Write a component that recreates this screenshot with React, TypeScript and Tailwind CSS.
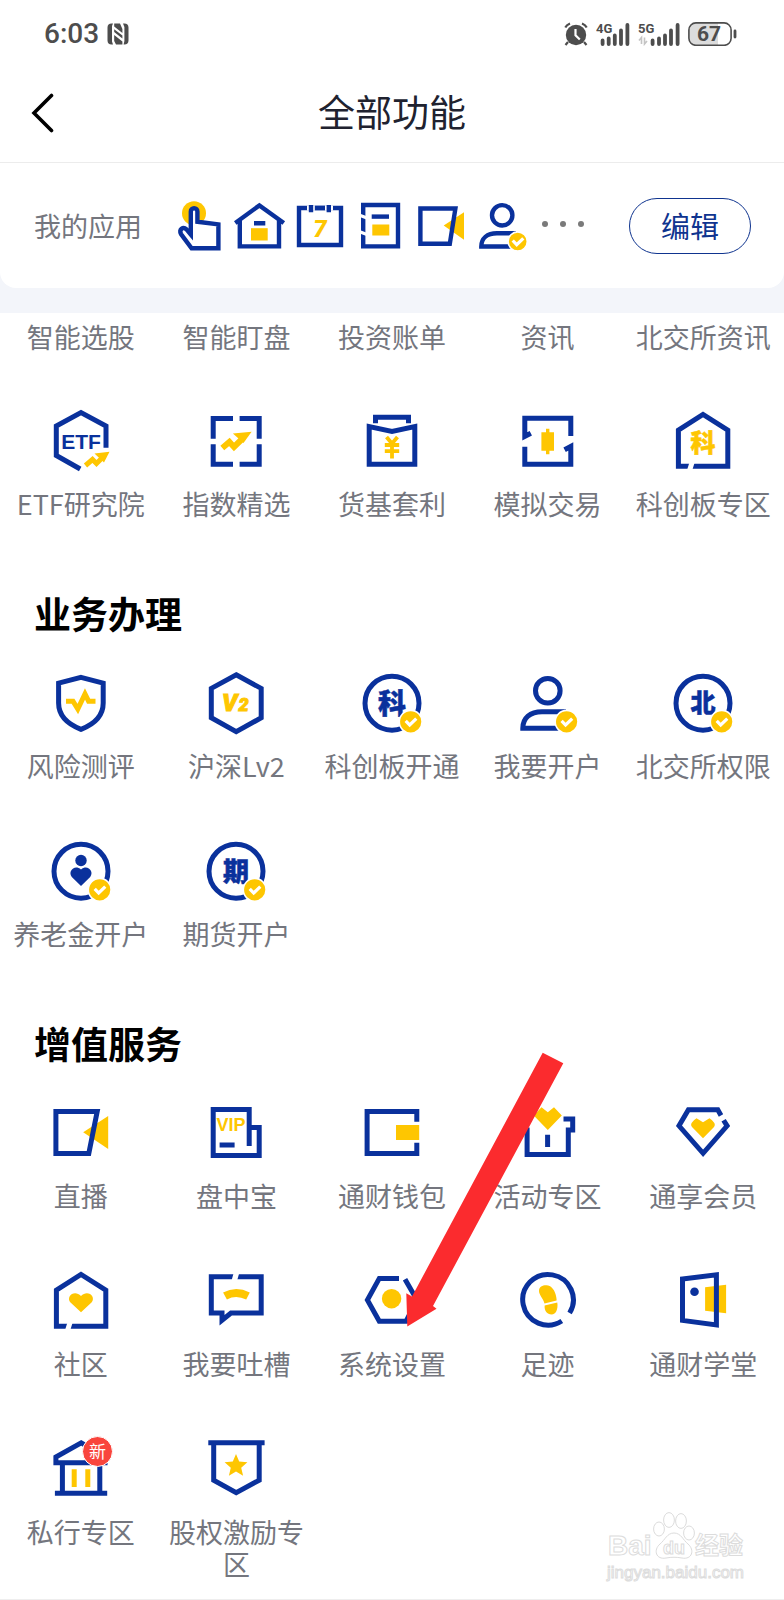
import { ReactNode } from "react"

const BLUE = "#0a319c"
const YELLOW = "#fec601"

interface AppItem {
    name: string
    icon: ReactNode
}

function Icon({ children }: { children: ReactNode }) {
    return (
        <svg viewBox="0 0 72 72" className="h-18 w-18" fill="none" stroke={BLUE} strokeWidth="5" aria-hidden="true">
            {children}
        </svg>
    )
}

function SmallIcon({ children }: { children: ReactNode }) {
    return (
        <svg viewBox="0 0 52 52" className="h-13 w-13 shrink-0" fill="none" stroke={BLUE} strokeWidth="4.4" aria-hidden="true">
            {children}
        </svg>
    )
}

function Check({ x, y, r }: { x: number, y: number, r: number }) {
    return (
        <g>
            <circle cx={x} cy={y} r={r + 1} fill={YELLOW} stroke="#fff" strokeWidth="1.6" />
            <path d={`M${x - 5} ${y - 1}l4 4.2l6.6 -6.4`} stroke="#fff" strokeWidth="3.2" />
        </g>
    )
}

function Glyph({ text, y, size, color }: { text: string, y: number, size: number, color: string }) {
    return (
        <text x="36" y={y} fontSize={size} fill={color} stroke={color} strokeWidth="0.5" textAnchor="middle" className="font-black">{text}</text>
    )
}

function House({ children }: { children: ReactNode }) {
    return (
        <Icon>
            <path d="M11.4 61.2V25.2L36 9.4L60.8 25.2V61.2Z" />
            <path d="M25.2 57L22.4 66" stroke="#fff" strokeWidth="5" />
            {children}
        </Icon>
    )
}

function Ring({ children }: { children: ReactNode }) {
    return (
        <Icon>
            <circle cx="36" cy="36.2" r="27" />
            {children}
            <Check x={54.7} y={54.8} r={10.4} />
        </Icon>
    )
}

const research: AppItem[] = [
    {
        name: "ETF研究院",
        icon: (
            <Icon>
                <path d="M61 42.7V21L36 7.6L11.3 21V50.5L35.2 64" />
                <text x="36" y="43.8" fontSize="21" fill={BLUE} stroke="none" textAnchor="middle" className="font-['Liberation_Sans',sans-serif] font-bold">ETF</text>
                <path d="M40.5 60.5L47.5 54.5L51.5 58.5L58 52" stroke={YELLOW} />
                <path d="M49.5 48.5L64.5 46.8L59 57.5Z" fill={YELLOW} stroke="none" />
            </Icon>
        ),
    },
    {
        name: "指数精选",
        icon: (
            <Icon>
                <path d="M33 13.4H13.2V33.7M39.6 13.4H59.2V33.7M33 59.3H13.2V39.3M39.6 59.3H59.2V39.3" />
                <path d="M22.3 43L29.4 37L34 42L43.6 32.5" stroke={YELLOW} strokeWidth="6" />
                <path d="M32.9 28.4L51.6 26.7L43.5 38Z" fill={YELLOW} stroke="none" />
            </Icon>
        ),
    },
    {
        name: "货基套利",
        icon: (
            <Icon>
                <path d="M19.5 18.3V12.2H52.5V18.3" />
                <path d="M13.2 21.6V59.3H58.8V21.6L36 26.4Z" />
                <path d="M30.5 32L36 38.5L41.5 32M28.8 40H43.2M28.8 46.2H43.2M36 38.5V53.4" stroke={YELLOW} strokeWidth="3.8" />
            </Icon>
        ),
    },
    {
        name: "模拟交易",
        icon: (
            <Icon>
                <path d="M58.8 31V13.2H12.8V31.4L18.8 28.2M12.8 41.7V59.3H58.8V41.4L52.6 44.8" />
                <path d="M29.4 27.3H34V23.7H37.4V27.3H42V45.7H37.4V49.2H34V45.7H29.4Z" fill={YELLOW} stroke="none" />
            </Icon>
        ),
    },
    {
        name: "科创板专区",
        icon: <House><Glyph text="科" y={47} size={25} color={YELLOW} /></House>,
    },
]

const business: AppItem[] = [
    {
        name: "风险测评",
        icon: (
            <Icon>
                <path d="M36 10.4L58.2 16.2V36C58.2 48 51 56.5 36 62.3C21 56.5 13.6 48 13.6 36V16.2Z" />
                <path d="M21 34.2H28L32.8 42L40 27L43.6 34.2H50.5" stroke={YELLOW} />
            </Icon>
        ),
    },
    {
        name: "沪深Lv2",
        icon: (
            <Icon>
                <path d="M36.2 7.8L61.2 21.4V50.8L36.2 64.6L11.3 50.8V21.4Z" />
                <g fill={YELLOW} stroke={YELLOW} strokeWidth="1" className="font-['Roboto',sans-serif] font-black italic">
                    <text x="22" y="44.2" fontSize="24">V</text>
                    <text x="38.5" y="44.2" fontSize="18">2</text>
                </g>
            </Icon>
        ),
    },
    {
        name: "科创板开通",
        icon: <Ring><Glyph text="科" y={46.5} size={28} color={BLUE} /></Ring>,
    },
    {
        name: "我要开户",
        icon: (
            <Icon>
                <circle cx="35.8" cy="23.7" r="12.3" />
                <path d="M54 44.7H30C18 44.7 10.8 51 10.8 61.3H50" />
                <Check x={54.6} y={54.8} r={10.4} />
            </Icon>
        ),
    },
    {
        name: "北交所权限",
        icon: <Ring><Glyph text="北" y={45} size={25} color={BLUE} /></Ring>,
    },
    {
        name: "养老金开户",
        icon: (
            <Ring>
                <circle cx="36" cy="25.5" r="5.7" fill={BLUE} stroke="none" />
                <path d="M36 51L26.8 42C22.5 36.5 29.5 29 36 34.6C42.5 29 49.5 36.5 45.2 42Z" fill={BLUE} stroke="none" />
            </Ring>
        ),
    },
    {
        name: "期货开户",
        icon: <Ring><Glyph text="期" y={46} size={26} color={BLUE} /></Ring>,
    },
]

const services: AppItem[] = [
    {
        name: "直播",
        icon: (
            <Icon>
                <path d="M38.2 35.3L63.2 19V52Z" fill={YELLOW} stroke="none" />
                <path d="M10.9 14.4H52.2L43.8 56.6H10.9Z" />
            </Icon>
        ),
    },
    {
        name: "盘中宝",
        icon: (
            <Icon>
                <path d="M49.2 49V12.6H13.2V58.6H59.2V30.4H50M19.6 48H34.6" />
                <text x="31" y="34.3" fontSize="18" fill={YELLOW} stroke="none" textAnchor="middle" className="font-['Liberation_Sans',sans-serif] font-bold">VIP</text>
            </Icon>
        ),
    },
    {
        name: "通财钱包",
        icon: (
            <Icon>
                <path d="M60.8 24.7V14.4H11.1V56.6H60.8V45.7" />
                <rect x="40" y="28" width="23.2" height="15" fill={YELLOW} stroke="none" />
            </Icon>
        ),
    },
    {
        name: "活动专区",
        icon: (
            <Icon>
                <path d="M19.5 22.1H10.6V33H15.1V57.5H56.3V33H60.7V22.1H51.5M35.6 37.7V50" />
                <path d="M35.8 33L21.7 18.5L29.5 10.3L35.8 15.3L42 10.3L49.8 18.5Z" fill={YELLOW} stroke="none" />
            </Icon>
        ),
    },
    {
        name: "通享会员",
        icon: (
            <Icon>
                <path d="M54 18.5L50.8 12.8H21.4L12 28.8L36.1 56.3L60.1 28.8L56.6 23.2" />
                <path d="M36 41.3L25 30C22.5 27 26 24 29.5 21.3L36 25.2L42.5 21.3C46 24 49.5 27 47 30Z" fill={YELLOW} stroke="none" />
            </Icon>
        ),
    },
    {
        name: "社区",
        icon: (
            <House>
                <path d="M36 47.3L25.5 37.5C20.5 31.5 29.5 24 36 31C42.5 24 51.5 31.5 46.5 37.5Z" fill={YELLOW} stroke="none" />
            </House>
        ),
    },
    {
        name: "我要吐槽",
        icon: (
            <Icon>
                <path d="M11.3 11.7H61.2V48H31L22 55.2V48H11.3Z" />
                <path d="M37 6L34.2 16" stroke="#fff" strokeWidth="5.4" />
                <path d="M25 31Q36 25 48 31" stroke={YELLOW} strokeWidth="8" />
            </Icon>
        ),
    },
    {
        name: "系统设置",
        icon: (
            <Icon>
                <path d="M43 13.4H23.3L11.4 35L23.3 56.3H50L61 35L49 14.2" />
                <circle cx="35.6" cy="33.7" r="9.7" fill={YELLOW} stroke="none" />
            </Icon>
        ),
    },
    {
        name: "足迹",
        icon: (
            <Icon>
                <path d="M57.6 48A25.3 25.3 0 1 0 49.8 56" />
                <path d="M32.5 38.6C31 33 27 30 27 26C27 21.5 31 20 34.5 20.2C39 20.5 42 24 43.5 29C44.5 32.5 44.6 34 44.6 35.4Z" fill={YELLOW} stroke="none" />
                <path d="M32.6 40.6L45.3 37.4C46.2 44 44 49.3 39.5 49.4C35 49.4 32.3 46 32.6 40.6Z" fill={YELLOW} stroke="none" />
            </Icon>
        ),
    },
    {
        name: "通财学堂",
        icon: (
            <Icon>
                <path d="M38.1 22.3L59.1 19.7V48.3L38.1 45.7Z" fill={YELLOW} stroke="none" />
                <path d="M15.5 13.9L49.4 9.8V60L15.5 55.4Z" />
                <circle cx="27.5" cy="26.7" r="4.3" fill={BLUE} stroke="none" />
            </Icon>
        ),
    },
    {
        name: "私行专区",
        icon: (
            <Icon>
                <path d="M62.5 29.7H10.9V24L36.2 9.8L61 24M17.4 30V60M54.8 30V60M9.9 60.2H62.2" />
                <path d="M29.2 36.3V54M42.8 36.3V54" stroke={YELLOW} />
                <circle cx="52.5" cy="18.5" r="15" fill="#f9453d" stroke="#fff" strokeWidth="1" />
                <text x="52.5" y="24.5" fontSize="17" fill="#fff" stroke="none" textAnchor="middle">新</text>
            </Icon>
        ),
    },
    {
        name: "股权激励专区",
        icon: (
            <Icon>
                <path d="M8.3 9.8H64.6M13.7 10V47.2L36.2 59.6L59.2 47.2V10" />
                <path d="M36 21L39.2 28.6L47.4 29.3L41.2 34.7L43.1 42.7L36 38.5L28.9 42.7L30.8 34.7L24.6 29.3L32.8 28.6Z" fill={YELLOW} stroke="none" />
            </Icon>
        ),
    },
]

const hiddenRow = ["智能选股", "智能盯盘", "投资账单", "资讯", "北交所资讯"]

function AppGrid({ items }: { items: AppItem[] }) {
    return (
        <ul className="grid grid-cols-5 gap-y-13 px-[3px]">
            {items.map((item) => (
                <li key={item.name} className="flex justify-center">
                    <button type="button" className="flex w-full flex-col items-center gap-[11px] self-start px-2 pb-px cursor-pointer">
                        {item.icon}
                        <span className="text-[27px] leading-8">{item.name}</span>
                    </button>
                </li>
            ))}
        </ul>
    )
}

function StatusBar() {
    return (
        <div className="flex h-16 items-center justify-between pl-11 pr-[47px] pt-1 text-[#4d4d4d]">
            <div className="flex items-center gap-2">
                <span className="font-['Roboto',sans-serif] text-[28px] leading-8 font-medium">6:03</span>
                <svg viewBox="0 0 22 22" className="h-[22px] w-[22px]" fill="currentColor" aria-hidden="true">
                    <path d="M4.5 0.5H6L5 3V18.5L6 21.5H4.5C2 21.5 0.5 20 0.5 17.5V4.5C0.5 2 2 0.5 4.5 0.5Z" />
                    <path d="M7.2 0.5H13L15.4 6V10L7.2 3.6ZM7.2 6.2L15.4 12.6V15.4L7.2 9ZM7.2 12L15.4 18.4V21.5H9L7.2 18Z" />
                    <path d="M16 0.5H17.5C20 0.5 21.5 2 21.5 4.5V17.5C21.5 20 20 21.5 17.5 21.5H16.6L17.4 18V4Z" />
                </svg>
            </div>
            <div className="flex items-center gap-2">
                <svg viewBox="0 0 24 24" className="h-6 w-6" fill="currentColor" aria-hidden="true">
                    <circle cx="12" cy="13" r="10.2" />
                    <path d="M4 20L1.5 23M20 20L22.5 23M1.3 5.5C2 4 3.5 2.5 6 1.5M22.7 5.5C22 4 20.5 2.5 18 1.5" stroke="currentColor" strokeWidth="2.2" fill="none" />
                    <path d="M11.5 7V13.2L15.8 17.5" stroke="#fff" strokeWidth="2.2" fill="none" />
                </svg>
                <svg viewBox="0 0 34 24" className="h-6 w-[34px]" aria-hidden="true">
                    <text x="0" y="11" fontSize="13" fill="currentColor" className="font-['Roboto',sans-serif] font-bold">4G</text>
                    <path d="M6.6 18.5V22M12.7 16.5V22M18.8 13.5V22M25 8.5V22M31.4 3V22" stroke="currentColor" strokeWidth="3.8" strokeLinecap="round" />
                </svg>
                <svg viewBox="0 0 42 24" className="h-6 w-[42px]" aria-hidden="true">
                    <text x="0" y="11" fontSize="13" fill="currentColor" className="font-['Roboto',sans-serif] font-bold">5G</text>
                    <path d="M1 18.5L3.5 15.5V22M6.5 15.5V22L9 19" stroke="#c4c4c4" strokeWidth="1.6" fill="none" />
                    <path d="M14.6 18.5V22M21 16.5V22M27 13.5V22M33 8.5V22M39.6 3V22" stroke="currentColor" strokeWidth="3.8" strokeLinecap="round" />
                </svg>
                <svg viewBox="0 0 49 24" className="h-6 w-[49px]" aria-hidden="true">
                    <path d="M8 1H30V23H8C3.5 23 1 21 1 17V7C1 3 3.5 1 8 1Z" fill="#dcdcdc" />
                    <rect x="0.9" y="0.9" width="42.2" height="22.4" rx="7" fill="none" stroke="currentColor" strokeWidth="1.6" />
                    <path d="M47 9V15" stroke="currentColor" strokeWidth="2.8" strokeLinecap="round" />
                    <text x="21" y="19.4" fontSize="21" fill="currentColor" textAnchor="middle" className="font-['Roboto',sans-serif] font-bold">67</text>
                </svg>
            </div>
        </div>
    )
}

function MyApps() {
    return (
        <div className="bg-[#f3f5fa] pb-[25px]">
            <div className="flex h-[125px] items-center rounded-b-2xl bg-white pl-[34px] pr-[33px]">
                <h2 className="mr-[31px] shrink-0 text-[27px] leading-8">我的应用</h2>
                <div className="flex items-center gap-[9px]">
                    <SmallIcon>
                        <circle cx="21" cy="13.3" r="12" fill={YELLOW} stroke="none" />
                        <path d="M17.8 34.5L13.5 29.4C10 26 5.8 29.5 8 34L18.6 48.2H45.4V24.4L24.4 21.7V11.5A3.3 3.3 0 0 0 17.8 11.5Z" fill="#fff" />
                    </SmallIcon>
                    <SmallIcon>
                        <path d="M1.2 23L25.4 5.4L49.8 23M5.8 20V46.4H45V20M20 23.2H31.3" />
                        <rect x="17" y="28.2" width="16.7" height="12.3" fill={YELLOW} stroke="none" />
                    </SmallIcon>
                    <SmallIcon>
                        <path d="M4 8H46V45H4Z" />
                        <path d="M12 8H20M30 8H38" stroke="#fff" strokeWidth="5" />
                        <path d="M16 5V12.2M33.8 5V12.2M19.8 8H30" />
                        <text x="25" y="36.8" fontSize="24" fill={YELLOW} stroke="none" textAnchor="middle" className="font-['Roboto',sans-serif] font-black italic">7</text>
                    </SmallIcon>
                    <SmallIcon>
                        <path d="M7.2 5H42V46.4H7.2Z" />
                        <path d="M3 15L11 18M3 31.5L11 34.5" stroke="#fff" strokeWidth="3.4" />
                        <path d="M15.7 16.6H33" />
                        <rect x="16.3" y="24.5" width="17" height="11" fill={YELLOW} stroke="none" />
                    </SmallIcon>
                    <SmallIcon>
                        <path d="M26.7 25.6L47 12.2V39.8Z" fill={YELLOW} stroke="none" />
                        <path d="M3.4 8.5H38.4L32.8 43.8H3.4Z" />
                    </SmallIcon>
                    <SmallIcon>
                        <circle cx="24.2" cy="15.3" r="10.2" />
                        <path d="M38 33.2H19C9 33.2 3.3 38.5 3.3 46.5H36" />
                        <Check x={39.7} y={41.5} r={8.6} />
                    </SmallIcon>
                </div>
                <div className="ml-3 flex gap-3 pb-1">
                    <span className="h-1.5 w-1.5 rounded-full bg-[#7a7a7a]" />
                    <span className="h-1.5 w-1.5 rounded-full bg-[#7a7a7a]" />
                    <span className="h-1.5 w-1.5 rounded-full bg-[#7a7a7a]" />
                </div>
                <button type="button" className="ml-auto h-14 w-[122px] shrink-0 rounded-full border border-[#0f348f] text-[29px] text-[#0f348f] cursor-pointer">
                    编辑
                </button>
            </div>
        </div>
    )
}

function Watermark() {
    return (
        <svg viewBox="0 0 144 72" className="absolute bottom-4 right-9 h-18 w-36" fill="#fff" stroke="#dcdcdc" strokeWidth="1" aria-hidden="true">
            <text x="4" y="44" fontSize="28" className="font-['Liberation_Sans',sans-serif] font-bold">Bai</text>
            <text x="91" y="43" fontSize="24" className="font-bold">经验</text>
            <path d="M70 22C77 22 79 29 84 33C91 39 88 49 78 47C72 46 68 46 62 47C52 49 49 39 56 33C61 29 63 22 70 22Z" />
            <ellipse cx="55" cy="18" rx="5.4" ry="7" />
            <ellipse cx="65" cy="9" rx="5.4" ry="7.4" />
            <ellipse cx="77" cy="10" rx="5.4" ry="7.4" />
            <ellipse cx="85" cy="22" rx="5.4" ry="7" />
            <text x="70" y="43" fontSize="18" textAnchor="middle" className="font-['Liberation_Sans',sans-serif] font-bold">du</text>
            <text x="3" y="67" fontSize="17" className="font-['Liberation_Sans',sans-serif]">jingyan.baidu.com</text>
        </svg>
    )
}

function App() {
    return (
        <div className="relative min-h-screen overflow-hidden border-b border-[#eeeeee] bg-white font-['Noto_Sans_CJK_SC',sans-serif] text-[#74767e]">
            <StatusBar />
            <header className="grid h-[99px] grid-cols-[1fr_auto_1fr] items-center border-b border-[#ececec] px-[31px]">
                <button type="button" aria-label="返回" className="w-fit cursor-pointer">
                    <svg viewBox="0 0 24 40" className="h-10 w-6" fill="none" stroke="#000" strokeWidth="3.6" strokeLinecap="round">
                        <path d="M20.5 2.5L3 20L20.5 37.5" />
                    </svg>
                </button>
                <h1 className="pb-1 text-[37px] leading-12 text-[#20222f]">全部功能</h1>
            </header>
            <MyApps />

            <main className="pt-2 pb-[18px]">
                <ul className="grid grid-cols-5 px-[3px] pb-13">
                    {hiddenRow.map((name) => (
                        <li key={name} className="text-center">
                            <button type="button" className="text-[27px] leading-8 cursor-pointer">{name}</button>
                        </li>
                    ))}
                </ul>
                <AppGrid items={research} />

                <section className="mt-17">
                    <h2 className="mb-[30px] px-[34px] text-[37px] leading-12 font-bold text-black">业务办理</h2>
                    <AppGrid items={business} />
                </section>

                <section className="relative mt-17">
                    <h2 className="mb-[30px] px-[34px] text-[37px] leading-12 font-bold text-black">增值服务</h2>
                    <AppGrid items={services} />
                    {/* pointer to the settings entry */}
                    <svg viewBox="0 0 161 276" className="pointer-events-none absolute left-1/2 top-8 ml-3 h-[276px] w-[161px]" fill="#fb2b2e" aria-hidden="true">
                        <path d="M138.7 1.7L159.3 12.3L29 255L32.5 257.7L3.3 275.5L2.3 242.3L8 245.5Z" />
                    </svg>
                </section>
            </main>
            <Watermark />
        </div>
    )
}

export default App
